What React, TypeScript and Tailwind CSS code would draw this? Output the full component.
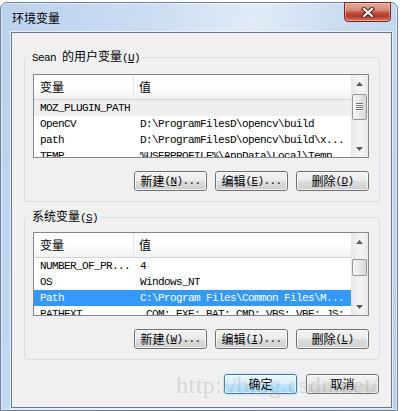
import type { ReactNode } from "react";

const mono = "font-['Liberation_Mono',monospace] text-[11px] tracking-[-0.6px]";

type Row = { name: string; value: string; state?: "selected" | "inactive" };

const userVars: Row[] = [
  { name: "MOZ_PLUGIN_PATH", value: "", state: "inactive" },
  { name: "OpenCV", value: "D:\\ProgramFilesD\\opencv\\build" },
  { name: "path", value: "D:\\ProgramFilesD\\opencv\\build\\x..." },
  { name: "TEMP", value: "%USERPROFILE%\\AppData\\Local\\Temp" },
];

const systemVars: Row[] = [
  { name: "NUMBER_OF_PR...", value: "4" },
  { name: "OS", value: "Windows_NT" },
  { name: "Path", value: "C:\\Program Files\\Common Files\\M...", state: "selected" },
  { name: "PATHEXT", value: ".COM;.EXE;.BAT;.CMD;.VBS;.VBE;.JS;" },
];

function Mono({ children }: { children: ReactNode }) {
  return <span className={mono}>{children}</span>;
}

function Arrow({ down }: { down?: boolean }) {
  return (
    <svg width="7" height="4" viewBox="0 0 7 4">
      <path d={down ? "M0 0H7L3.5 4Z" : "M0 4H7L3.5 0Z"} fill="#5a5a5a" />
    </svg>
  );
}

function WinButton({ children, primary }: { children: ReactNode; primary?: boolean }) {
  return (
    <button
      type="button"
      className={`h-[20px] w-[73px] rounded-[3px] border p-0 leading-none text-black ${
        primary
          ? "border-[#3c7fb1] bg-[linear-gradient(#eaf6fd_0%,#d9f0fc_50%,#bee6fd_50%,#a7d9f5_100%)] shadow-[0_0_2px_#7fc4ee]"
          : "border-[#707070] bg-[linear-gradient(#f2f2f2_0%,#ebebeb_50%,#dddddd_50%,#cfcfcf_100%)]"
      }`}
    >
      <span className="flex h-full w-full items-center justify-center rounded-[2px] border border-white/70">
        {children}
      </span>
    </button>
  );
}

function ScrollBar({ thumbTop, thumbHeight, grip }: { thumbTop: number; thumbHeight: number; grip?: boolean }) {
  return (
    <div className="flex w-[17px] shrink-0 flex-col bg-[linear-gradient(to_right,#e6e6e6,#f2f2f2_40%,#f2f2f2_70%,#e9e9e9)]">
      <div className="flex h-[17px] items-center justify-center">
        <Arrow />
      </div>
      <div className="flex-1">
        <div
          className="mx-[1px] flex items-center justify-center rounded-[2px] border border-[#979797] bg-[linear-gradient(to_right,#f6f6f6,#e8e8e8_50%,#d6d6d6)]"
          style={{ marginTop: thumbTop, height: thumbHeight }}
        >
          {grip && (
            <div className="flex flex-col">
              {[0, 1, 2, 3].map((i) => (
                <div key={i} className="h-[2px] w-[7px] border-t border-[#707070] bg-white" />
              ))}
            </div>
          )}
        </div>
      </div>
      <div className="flex h-[17px] items-center justify-center">
        <Arrow down />
      </div>
    </div>
  );
}

function VarList({ rows, thumbTop, thumbHeight, grip }: { rows: Row[]; thumbTop: number; thumbHeight: number; grip?: boolean }) {
  return (
    <div className="flex h-[84px] overflow-hidden border border-[#828790] bg-white">
      <div className="flex min-w-0 flex-1 flex-col overflow-hidden">
        <div className="flex h-[25px] shrink-0 border-b border-[#d5d5d5] bg-[linear-gradient(#ffffff_0%,#ffffff_45%,#f1f2f4_100%)]">
          <div className="flex w-[100px] items-center border-r border-[#e3e4e8] pl-[6px]">变量</div>
          <div className="flex items-center pl-[5px]">值</div>
        </div>
        {rows.map((row) => (
          <div
            key={row.name}
            className={`flex h-[16px] shrink-0 items-center whitespace-nowrap ${
              row.state === "selected"
                ? "bg-[#3399ff] text-white"
                : row.state === "inactive"
                  ? "bg-[#efefef] text-black"
                  : "text-black"
            }`}
          >
            <div className={`w-[100px] shrink-0 overflow-hidden pl-[6px] ${mono}`}>{row.name}</div>
            <div className={`overflow-hidden pl-[6px] ${mono}`}>{row.value}</div>
          </div>
        ))}
      </div>
      <ScrollBar thumbTop={thumbTop} thumbHeight={thumbHeight} grip={grip} />
    </div>
  );
}

function GroupBox({ legend, children, className }: { legend: ReactNode; children: ReactNode; className?: string }) {
  return (
    <fieldset className={`mr-[11px] ml-[12px] rounded-[3px] border border-[#d5dfe5] pb-[10px] ${className ?? ""}`}>
      <legend className="ml-[5px] px-[2px] leading-[16px]">{legend}</legend>
      {children}
    </fieldset>
  );
}

function ButtonRow({ keys }: { keys: [string, string, string] }) {
  return (
    <div className="mt-[13px] mr-[10px] flex justify-end gap-[8px]">
      <WinButton>
        新建<Mono>(<u>{keys[0]}</u>)...</Mono>
      </WinButton>
      <WinButton>
        编辑<Mono>(<u>{keys[1]}</u>)...</Mono>
      </WinButton>
      <WinButton>
        删除<Mono>(<u>{keys[2]}</u>)</Mono>
      </WinButton>
    </div>
  );
}

export default function App() {
  return (
    <div className="relative h-[411px] w-[404px] overflow-hidden bg-white pt-[2px] font-['Noto_Sans_CJK_SC',sans-serif] text-[12px] text-black">
      <div className="flex h-[409px] w-[398px] flex-col rounded-t-[7px] border border-[#6f8298] bg-[linear-gradient(100deg,#bad2ee_0%,#cadcf2_30%,#e0ebf7_55%,#c9dbf1_75%,#b8d0ec_100%)] shadow-[inset_0_0_0_1px_rgba(255,255,255,0.5)]">
        <div className="flex h-[29px] shrink-0 items-start justify-between">
          <span className="mt-[7px] pl-[11px] leading-[16px]">环境变量</span>
          <div className="-mt-[1px] mr-[6px] flex h-[20px] w-[47px] items-center justify-center rounded-b-[4px] border border-[#6b2b24] bg-[linear-gradient(#e8aa9c_0%,#d98676_40%,#c44a38_55%,#b83a28_75%,#d77a62_100%)] shadow-[inset_0_0_0_1px_rgba(255,220,210,0.45)]">
            <svg width="14" height="11" viewBox="0 0 14 11">
              <path d="M3 2L11 9M11 2L3 9" stroke="#4a2420" strokeWidth="4.2" strokeLinecap="square" />
              <path d="M3 2L11 9M11 2L3 9" stroke="#ffffff" strokeWidth="2.2" strokeLinecap="square" />
            </svg>
          </div>
        </div>

        <div className="mr-[5px] ml-[10px] flex shrink-0 flex-col border border-[#67788c] bg-[#f0f0f0] pt-[15px] pb-[13px] shadow-[0_0_0_1px_rgba(255,255,255,0.6)]">
          <GroupBox
            legend={
              <>
                <Mono>Sean </Mono>的用户变量<Mono>(<u>U</u>)</Mono>
              </>
            }
          >
            <div className="mt-[8px] mr-[10px] ml-[8px]">
              <VarList rows={userVars} thumbTop={2} thumbHeight={26} grip />
            </div>
            <ButtonRow keys={["N", "E", "D"]} />
          </GroupBox>

          <GroupBox
            className="mt-[6px]"
            legend={
              <>
                系统变量<Mono>(<u>S</u>)</Mono>
              </>
            }
          >
            <div className="mt-[6px] mr-[10px] ml-[8px]">
              <VarList rows={systemVars} thumbTop={9} thumbHeight={17} />
            </div>
            <ButtonRow keys={["W", "I", "L"]} />
          </GroupBox>

          <div className="mt-[14px] mr-[12px] flex justify-end gap-[9px]">
            <WinButton primary>确定</WinButton>
            <WinButton>取消</WinButton>
          </div>
        </div>
      </div>

      <div className="pointer-events-none absolute top-[373px] left-[176px] font-['Liberation_Serif',serif] text-[24px] leading-[24px] tracking-[0.5px] whitespace-nowrap text-[rgba(150,150,150,0.3)]">
        http://blog.csdn.net/
      </div>
    </div>
  );
}
